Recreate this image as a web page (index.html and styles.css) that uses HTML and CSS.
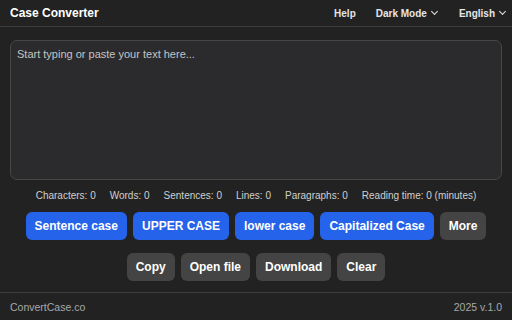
FILE: index.html
```html
<!DOCTYPE html>
<html lang="en">
<head>
  <meta charset="UTF-8">
  <meta name="viewport" content="width=device-width, initial-scale=1.0">
  <title>Case Converter</title>
  <link rel="stylesheet" href="styles.css">
</head>
<body>
  <header class="topbar">
    <div class="brand">Case Converter</div>
    <nav class="menu">
      <a href="#">Help</a>
      <a href="#">Dark Mode <span class="caret"></span></a>
      <a href="#">English <span class="caret"></span></a>
    </nav>
  </header>

  <main class="main">
    <textarea class="editor" placeholder="Start typing or paste your text here..."></textarea>

    <div class="stats">
      <span>Characters: 0</span>
      <span>Words: 0</span>
      <span>Sentences: 0</span>
      <span>Lines: 0</span>
      <span>Paragraphs: 0</span>
      <span>Reading time: 0 (minutes)</span>
    </div>

    <div class="actions">
      <button class="btn primary">Sentence case</button>
      <button class="btn primary">UPPER CASE</button>
      <button class="btn primary">lower case</button>
      <button class="btn primary">Capitalized Case</button>
      <button class="btn">More</button>
    </div>

    <div class="actions">
      <button class="btn">Copy</button>
      <button class="btn">Open file</button>
      <button class="btn">Download</button>
      <button class="btn">Clear</button>
    </div>
  </main>

  <footer class="footer">
    <span>ConvertCase.co</span>
    <span>2025 v.1.0</span>
  </footer>
</body>
</html>
```

FILE: styles.css
```css
* {
  box-sizing: border-box;
}
body {
  margin: 0;
  height: 320px;
  display: flex;
  flex-direction: column;
  font-family: 'Liberation Sans', Arial, sans-serif;
  background-color: #222222;
  color: #e6e6e6;
}
.topbar {
  height: 27px;
  display: flex;
  align-items: center;
  justify-content: space-between;
  padding: 0 5px 0 10px;
  border-bottom: 1px solid #3d3d3d;
}
.brand {
  font-size: 12px;
  font-weight: 700;
  color: #ffffff;
}
.menu {
  display: flex;
  gap: 20px;
}
.menu a {
  font-size: 10px;
  font-weight: 700;
  color: #e6e6e6;
  text-decoration: none;
  display: flex;
  align-items: center;
  gap: 3px;
}
.caret {
  width: 5px;
  height: 5px;
  border-right: 1.2px solid #e6e6e6;
  border-bottom: 1.2px solid #e6e6e6;
  transform: rotate(45deg);
  margin: -3px 2px 0 2px;
}
.main {
  flex: 1;
  padding: 13px 10px 0 10px;
}
.editor {
  display: block;
  width: 100%;
  height: 140px;
  resize: none;
  background: #2b2b2d;
  border: 1px solid #474747;
  border-radius: 7px;
  padding: 7px 6px;
  font-family: 'Liberation Sans', Arial, sans-serif;
  font-size: 11px;
  color: #e6e6e6;
}
.editor::placeholder {
  color: #c4c4c4;
}
.stats {
  display: flex;
  justify-content: center;
  gap: 14px;
  margin-top: 9px;
  font-size: 10px;
  line-height: 14px;
  color: #d0d0d0;
}
.actions {
  display: flex;
  justify-content: center;
  gap: 6px;
  margin-top: 9px;
}
.actions + .actions {
  margin-top: 13px;
}
.btn {
  height: 28px;
  padding: 0 9px;
  border: none;
  border-radius: 6px;
  background: #444444;
  color: #ffffff;
  font-family: 'Liberation Sans', Arial, sans-serif;
  font-size: 12px;
  font-weight: 700;
  cursor: pointer;
}
.btn.primary {
  background: #2563eb;
}
.footer {
  height: 28px;
  display: flex;
  align-items: center;
  justify-content: space-between;
  padding: 0 10px;
  border-top: 1px solid #3d3d3d;
  font-size: 10.5px;
  color: #a8a8a8;
}
```
